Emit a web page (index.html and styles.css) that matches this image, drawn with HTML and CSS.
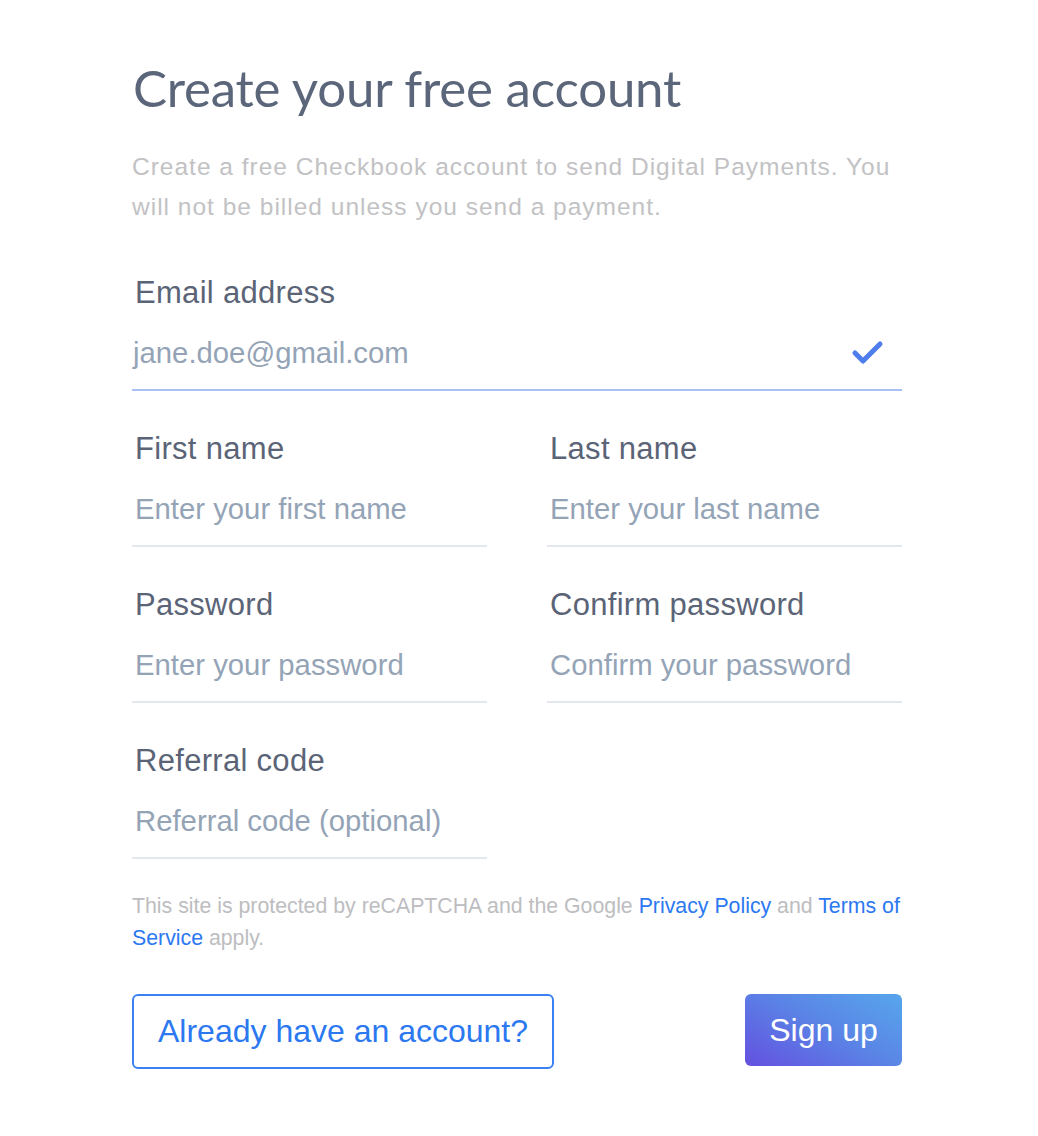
FILE: index.html
```html
<!DOCTYPE html>
<html>
<head>
<meta charset="utf-8">
<link rel="stylesheet" href="styles.css">
</head>
<body>
<main class="page">
  <h1 class="title">Create your free account</h1>
  <p class="subtitle">Create a free Checkbook account to send Digital Payments. You will not be billed unless you send a payment.</p>

  <div class="field field-full field-valid">
    <label class="label">Email address</label>
    <div class="input-row">
      <span class="value">jane.doe@gmail.com</span>
      <svg class="check" width="34" height="26" viewBox="0 0 34 26"><path d="M4 13 L12 21 L29 4" fill="none" stroke="#4f7ded" stroke-width="5" stroke-linecap="round" stroke-linejoin="round"/></svg>
    </div>
  </div>

  <div class="grid">
    <div class="field">
      <label class="label">First name</label>
      <div class="input-row"><span class="value">Enter your first name</span></div>
    </div>
    <div class="field">
      <label class="label">Last name</label>
      <div class="input-row"><span class="value">Enter your last name</span></div>
    </div>
    <div class="field">
      <label class="label">Password</label>
      <div class="input-row"><span class="value">Enter your password</span></div>
    </div>
    <div class="field">
      <label class="label">Confirm password</label>
      <div class="input-row"><span class="value">Confirm your password</span></div>
    </div>
    <div class="field">
      <label class="label">Referral code</label>
      <div class="input-row"><span class="value">Referral code (optional)</span></div>
    </div>
  </div>

  <p class="legal">This site is protected by reCAPTCHA and the Google <a href="#">Privacy Policy</a> and <a href="#">Terms of Service</a> apply.</p>

  <div class="actions">
    <button class="btn btn-outline">Already have an account?</button>
    <button class="btn btn-primary">Sign up</button>
  </div>
</main>
</body>
</html>
```
FILE: styles.css
```css
* { box-sizing: border-box; }
html, body { margin: 0; padding: 0; background: #fff; }
body { font-family: "Liberation Sans", Arial, sans-serif; }

.page {
  width: 770px;
  margin: 0 0 0 132px;
  padding-top: 56px;
}

.title {
  font-family: "Lato", "Open Sans", sans-serif;
  font-weight: 400;
  font-size: 51px;
  line-height: 64px;
  color: #5c667a;
  margin: 0 0 0 1px;
  letter-spacing: -0.2px;
}

.subtitle {
  font-size: 24.5px;
  letter-spacing: 1px;
  line-height: 40px;
  color: #c2c2c4;
  margin: 27px 0 0 0;
}

.field {
  display: flex;
  flex-direction: column;
  border-bottom: 2px solid #e3e8ee;
}
.field-valid { border-bottom-color: #a8c0f3; }
.field-full { margin-top: 46px; }

.label {
  font-size: 31px;
  letter-spacing: 0.3px;
  line-height: 40px;
  color: #5b6477;
  padding-left: 3px;
}

.input-row {
  display: flex;
  align-items: center;
  justify-content: space-between;
  height: 56px;
  margin-top: 12px;
  margin-bottom: 8px;
  padding-left: 3px;
}
.field-full .input-row { padding-left: 1px; }

.value {
  font-size: 29.3px;
  color: #94a4b6;
}

.check { margin-right: 17px; }

.grid {
  display: grid;
  grid-template-columns: 355px 355px;
  column-gap: 60px;
}
.grid .field { margin-top: 38px; }

.legal {
  font-size: 21.3px;
  line-height: 32px;
  color: #bdbdbf;
  margin: 31px 0 0 0;
}
.legal a { color: #2b78f1; text-decoration: none; }

.actions {
  display: flex;
  justify-content: space-between;
  align-items: flex-start;
  margin-top: 40px;
}

.btn {
  font-family: "Liberation Sans", Arial, sans-serif;
  font-size: 32px;
  border-radius: 6px;
  cursor: pointer;
  padding: 0;
}
.btn-outline {
  width: 422px;
  height: 75px;
  background: #fff;
  border: 2px solid #3a82f3;
  color: #2b78f1;
}
.btn-primary {
  width: 157px;
  height: 72px;
  border: none;
  color: #fff;
  background: linear-gradient(30deg, #6450e0 0%, #5a86e6 55%, #57a6ec 100%);
}
```
